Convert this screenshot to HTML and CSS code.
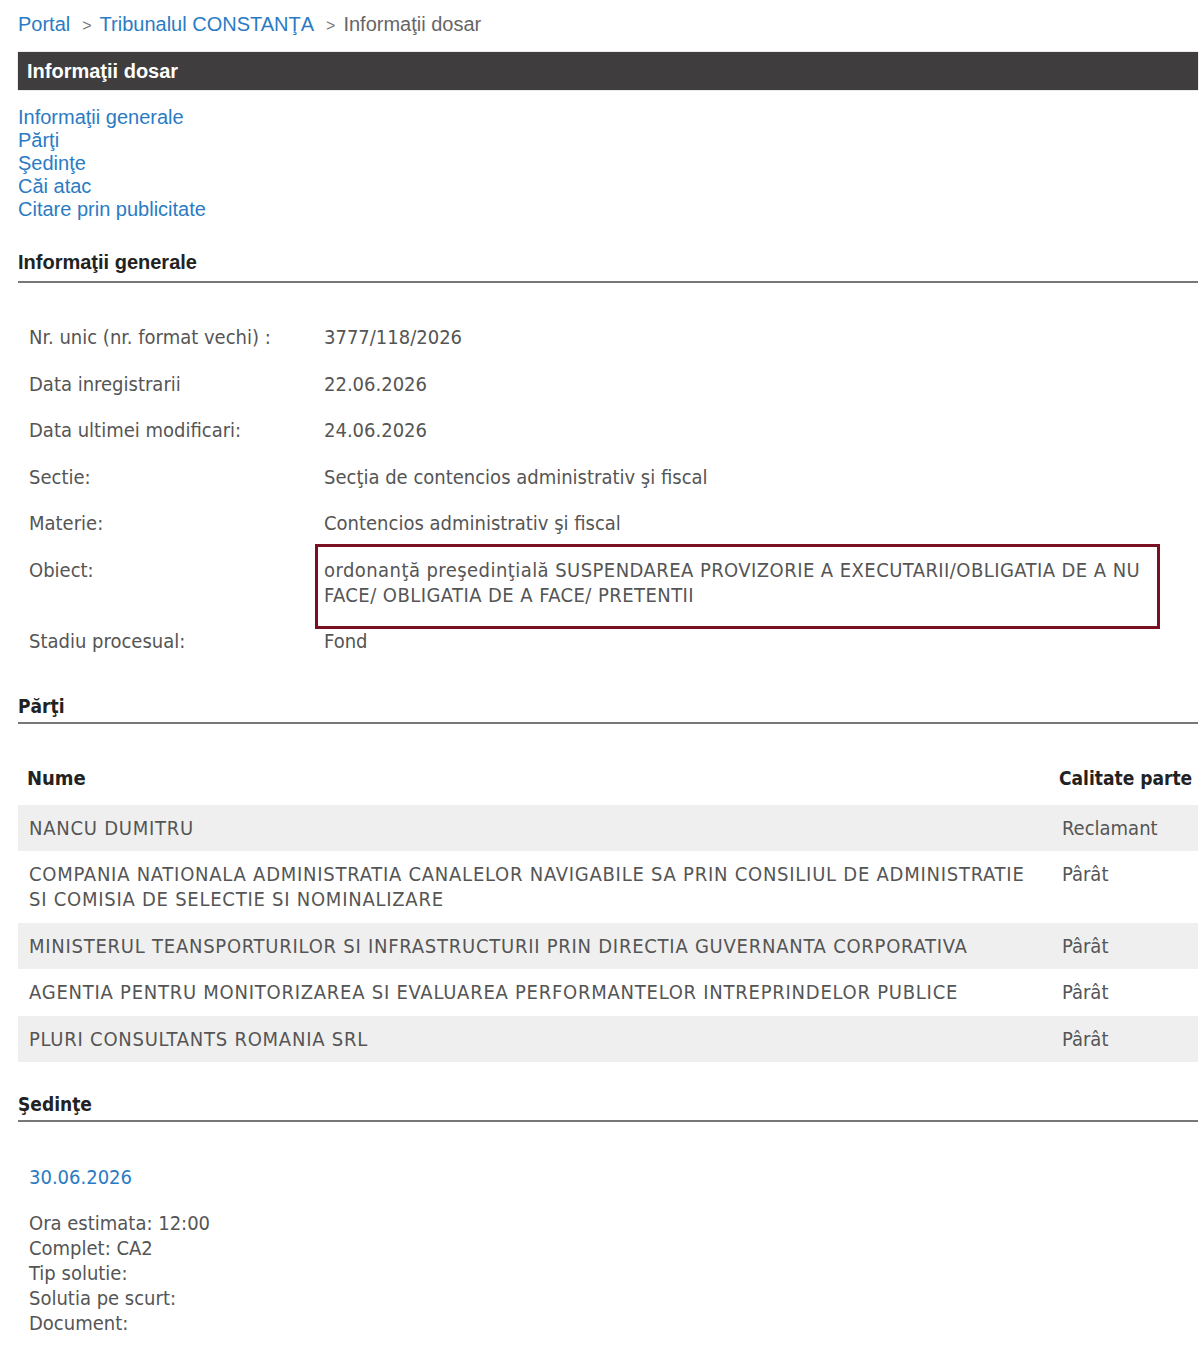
FILE: index.html
```html
<!DOCTYPE html>
<html lang="ro">
<head>
<meta charset="utf-8">
<title>Informaţii dosar</title>
<link rel="stylesheet" href="styles.css">
</head>
<body>
<div class="page">
  <nav class="crumbs">
    <a href="#">Portal</a><span class="sep">&gt;</span><a href="#">Tribunalul CONSTANŢA</a><span class="sep">&gt;</span><span class="here">Informaţii dosar</span>
  </nav>

  <h1 class="bar">Informaţii dosar</h1>

  <ul class="toc">
    <li><a href="#gen">Informaţii generale</a></li>
    <li><a href="#parti">Părţi</a></li>
    <li><a href="#sedinte">Şedinţe</a></li>
    <li><a href="#cai">Căi atac</a></li>
    <li><a href="#citare">Citare prin publicitate</a></li>
  </ul>

  <h2 class="sect sect-arial" id="gen">Informaţii generale</h2>
  <table class="info">
    <tr><td class="lbl">Nr. unic (nr. format vechi) :</td><td>3777/118/2026</td></tr>
    <tr><td class="lbl">Data inregistrarii</td><td>22.06.2026</td></tr>
    <tr><td class="lbl">Data ultimei modificari:</td><td>24.06.2026</td></tr>
    <tr><td class="lbl">Sectie:</td><td>Secţia de contencios administrativ şi fiscal</td></tr>
    <tr><td class="lbl">Materie:</td><td>Contencios administrativ şi fiscal</td></tr>
    <tr><td class="lbl">Obiect:</td><td class="obiect"><span class="mark"></span>ordonanţă preşedinţială SUSPENDAREA PROVIZORIE A EXECUTARII/OBLIGATIA DE A NU FACE/ OBLIGATIA DE A FACE/ PRETENTII</td></tr>
    <tr><td class="lbl">Stadiu procesual:</td><td>Fond</td></tr>
  </table>

  <h2 class="sect" id="parti">Părţi</h2>
  <table class="parti">
    <thead>
      <tr><th>Nume</th><th class="cal">Calitate parte</th></tr>
    </thead>
    <tbody>
      <tr><td class="nume">NANCU DUMITRU</td><td class="cal">Reclamant</td></tr>
      <tr><td class="nume">COMPANIA NATIONALA ADMINISTRATIA CANALELOR NAVIGABILE SA PRIN CONSILIUL DE ADMINISTRATIE SI COMISIA DE SELECTIE SI NOMINALIZARE</td><td class="cal">Pârât</td></tr>
      <tr><td class="nume">MINISTERUL TEANSPORTURILOR SI INFRASTRUCTURII PRIN DIRECTIA GUVERNANTA CORPORATIVA</td><td class="cal">Pârât</td></tr>
      <tr><td class="nume">AGENTIA PENTRU MONITORIZAREA SI EVALUAREA PERFORMANTELOR INTREPRINDELOR PUBLICE</td><td class="cal">Pârât</td></tr>
      <tr><td class="nume">PLURI CONSULTANTS ROMANIA SRL</td><td class="cal">Pârât</td></tr>
    </tbody>
  </table>

  <h2 class="sect" id="sedinte">Şedinţe</h2>
  <div class="sedinta">
    <a class="data" href="#">30.06.2026</a>
    <div class="det">
      <div>Ora estimata: 12:00</div>
      <div>Complet: CA2</div>
      <div>Tip solutie:</div>
      <div>Solutia pe scurt:</div>
      <div>Document:</div>
    </div>
  </div>
</div>
</body>
</html>
```

FILE: styles.css
```css
html, body {
  margin: 0;
  padding: 0;
  background: #fff;
}

.page {
  width: 1180px;
  margin-left: 18px;
  font-family: "DejaVu Sans Condensed", "DejaVu Sans", sans-serif;
  font-size: 20px;
  color: #555;
}

a {
  color: #2b7bc4;
  text-decoration: none;
}

/* breadcrumb */
.crumbs {
  font-family: "Liberation Sans", Arial, sans-serif;
  font-size: 20px;
  height: 24px;
  line-height: 24px;
  padding-top: 12px;
}
.crumbs .sep {
  color: #777;
  font-size: 16px;
  margin: 0 8px 0 12px;
}
.crumbs .here {
  color: #666;
}

/* title bar */
.bar {
  margin: 16px 0 0;
  height: 38px;
  line-height: 38px;
  background: #3f3d3e;
  color: #fff;
  font-family: "Liberation Sans", Arial, sans-serif;
  font-size: 20px;
  font-weight: bold;
  padding-left: 9px;
  box-shadow: 0 0 1px #888;
}

/* table of contents */
.toc {
  list-style: none;
  margin: 16px 0 0;
  padding: 0;
  font-family: "Liberation Sans", Arial, sans-serif;
  font-size: 20px;
  line-height: 23px;
}

/* section headings */
.sect {
  margin: 0;
  font-size: 19px;
  line-height: 24px;
  font-weight: bold;
  color: #222;
  padding-bottom: 4px;
  border-bottom: 2px solid #777;
}
.sect-arial {
  font-family: "Liberation Sans", Arial, sans-serif;
  font-size: 20px;
  margin-top: 29px;
  padding-bottom: 7px;
}

/* general info */
.info {
  border-collapse: collapse;
  margin-top: 32px;
  width: 1142px;
}
.info td {
  padding: 10px 0 11.5px;
  vertical-align: top;
  line-height: 25px;
}
.info td.lbl {
  width: 295px;
  padding-left: 11px;
}
.info td.obiect {
  position: relative;
  letter-spacing: 0.44px;
}
/* highlight frame round the subject cell */
.mark {
  position: absolute;
  left: -9px;
  right: 0;
  top: -3.5px;
  bottom: -10px;
  border: 3px solid #7b1023;
}

/* parties */
#parti {
  margin-top: 28px;
}
.parti {
  width: 100%;
  border-collapse: collapse;
  margin-top: 32px;
}
.parti th {
  text-align: left;
  color: #222;
  font-weight: bold;
  padding: 10px 0 14px 9px;
  line-height: 25px;
  vertical-align: top;
}
.parti th.cal {
  white-space: nowrap;
  font-size: 19px;
}
.parti td {
  padding: 11px 16px 10.5px 11px;
  line-height: 25px;
  vertical-align: top;
}
.parti td.nume {
  letter-spacing: 0.75px;
}
.parti tbody tr:nth-child(odd) {
  background: #efefef;
}
.parti .cal {
  box-sizing: border-box;
  width: 147px;
  padding-left: 8px;
  padding-right: 0;
}
.parti td.cal {
  padding-left: 11px;
}

/* hearings */
#sedinte {
  margin-top: 30px;
}
.sedinta {
  padding: 43px 0 0 11px;
}
.sedinta .data {
  display: block;
  line-height: 25px;
}
.det {
  margin-top: 21px;
  line-height: 25px;
}
```
